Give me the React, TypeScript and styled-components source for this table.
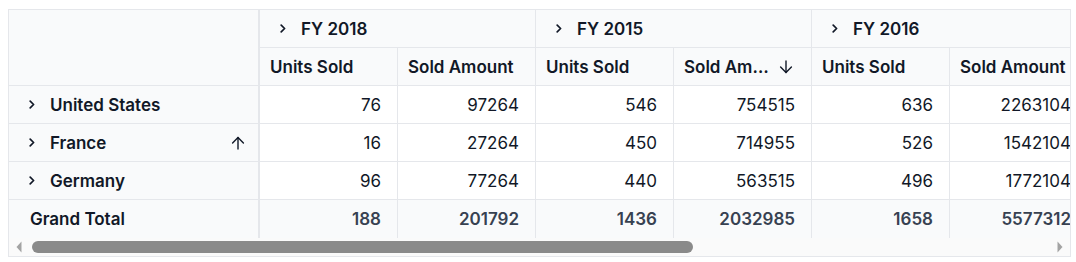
import React from "react"
import styled, { createGlobalStyle } from "styled-components"

const GlobalStyle = createGlobalStyle`
  html, body {
    margin: 0;
    overflow: hidden;
    background: #ffffff;
  }
  body {
    padding: 9px 8px 8px;
    font-family: Inter, "Noto Sans", sans-serif;
    color: #111827;
  }
`

const border = "#e5e7eb"
const headerBg = "#f9fafb"

const PivotFrame = styled.div`
  width: 1063px;
  border: 1px solid ${border};
  box-sizing: border-box;
  background: #ffffff;
`

const Viewport = styled.div`
  overflow: hidden;
`

const Grid = styled.div`
  display: grid;
  grid-template-columns: 251px repeat(6, 138px);
  grid-auto-rows: 38px;
  width: max-content;
  font-size: 17px;
`

const Cell = styled.div`
  box-sizing: border-box;
  display: flex;
  align-items: center;
  border-right: 1px solid ${border};
  border-bottom: 1px solid ${border};
  white-space: nowrap;
  overflow: hidden;
`

const CornerCell = styled(Cell)`
  grid-row: span 2;
  background: ${headerBg};
  border-right-width: 2px;
`

const GroupHeader = styled(Cell)`
  grid-column: span 2;
  background: ${headerBg};
  font-weight: 600;
  padding-left: 20px;
`

const ValueHeader = styled(Cell)`
  background: ${headerBg};
  font-weight: 600;
  padding: 0 18px 0 10px;
  gap: 4px;
`

const HeaderText = styled.span`
  overflow: hidden;
  text-overflow: ellipsis;
  flex: 1;
`

const RowHeader = styled(Cell)<{ $total?: boolean }>`
  background: ${headerBg};
  font-weight: 600;
  border-right-width: 2px;
  padding: 0 13px 0 ${({ $total }) => ($total ? "21px" : "20px")};
  border-bottom-width: ${({ $total }) => ($total ? "0" : "1px")};
`

const RowLabel = styled.span`
  flex: 1;
`

const ValueCell = styled(Cell)<{ $total?: boolean }>`
  justify-content: flex-end;
  padding-right: 16px;
  background: ${({ $total }) => ($total ? headerBg : "#ffffff")};
  font-weight: ${({ $total }) => ($total ? 600 : 400)};
  color: ${({ $total }) => ($total ? "#374151" : "#111827")};
  border-bottom-width: ${({ $total }) => ($total ? "0" : "1px")};
`

const ChevronBox = styled.svg`
  width: 6px;
  height: 9px;
  margin-right: 15px;
  flex: none;
`

const SortArrow = styled.svg`
  width: 14px;
  height: 14px;
  flex: none;
`

const ScrollBar = styled.div`
  display: flex;
  align-items: center;
  height: 18px;
  background: #fafafa;
  padding: 0 7px;
  gap: 10px;
`

const ScrollArrow = styled.svg`
  width: 6px;
  height: 12px;
  flex: none;
`

const ScrollTrack = styled.div`
  flex: 1;
  height: 12px;
`

const ScrollThumb = styled.div`
  height: 12px;
  border-radius: 6px;
  background: #8a8a8a;
`

const Chevron = () => (
  <ChevronBox viewBox="0 0 6 9">
    <path d="M1.2 1.2 L4.6 4.5 L1.2 7.8" fill="none" stroke="#111827" strokeWidth="1.7" strokeLinecap="round" strokeLinejoin="round" />
  </ChevronBox>
)

const Arrow = ({ dir }: { dir: "up" | "down" }) => (
  <SortArrow viewBox="0 0 14 14">
    <g fill="none" stroke="#111827" strokeWidth="1.4" strokeLinecap="round" strokeLinejoin="round" transform={dir === "down" ? "rotate(180 7 7)" : undefined}>
      <path d="M7 1.5 V13" />
      <path d="M1.6 6.9 L7 1.5 L12.4 6.9" />
    </g>
  </SortArrow>
)

type Row = { country: string; values: number[]; sorted?: boolean }

const years = ["FY 2018", "FY 2015", "FY 2016"]

const rows: Row[] = [
  { country: "United States", values: [76, 97264, 546, 754515, 636, 2263104] },
  { country: "France", values: [16, 27264, 450, 714955, 526, 1542104], sorted: true },
  { country: "Germany", values: [96, 77264, 440, 563515, 496, 1772104] },
]

const totals = [188, 201792, 1436, 2032985, 1658, 5577312]

export default function App() {
  return (
    <>
      <GlobalStyle />
      <PivotFrame>
        <Viewport>
          <Grid>
            <CornerCell />
            {years.map(y => (
              <GroupHeader key={y}>
                <Chevron />
                {y}
              </GroupHeader>
            ))}
            {years.map(y => (
              <React.Fragment key={y}>
                <ValueHeader>
                  <HeaderText>Units Sold</HeaderText>
                </ValueHeader>
                <ValueHeader>
                  <HeaderText>Sold Amount</HeaderText>
                  {y === "FY 2015" && <Arrow dir="down" />}
                </ValueHeader>
              </React.Fragment>
            ))}
            {rows.map(r => (
              <React.Fragment key={r.country}>
                <RowHeader>
                  <Chevron />
                  <RowLabel>{r.country}</RowLabel>
                  {r.sorted && <Arrow dir="up" />}
                </RowHeader>
                {r.values.map((v, i) => (
                  <ValueCell key={i}>{v}</ValueCell>
                ))}
              </React.Fragment>
            ))}
            <RowHeader $total>
              <RowLabel>Grand Total</RowLabel>
            </RowHeader>
            {totals.map((v, i) => (
              <ValueCell key={i} $total>
                {v}
              </ValueCell>
            ))}
          </Grid>
        </Viewport>
        <ScrollBar>
          <ScrollArrow viewBox="0 0 6 12">
            <path d="M5.5 0.5 L0.5 6 L5.5 11.5 Z" fill="#a3a3a3" />
          </ScrollArrow>
          <ScrollTrack>
            <ScrollThumb style={{ width: `${(1062 / 1631) * 100}%` }} />
          </ScrollTrack>
          <ScrollArrow viewBox="0 0 6 12">
            <path d="M0.5 0.5 L5.5 6 L0.5 11.5 Z" fill="#a3a3a3" />
          </ScrollArrow>
        </ScrollBar>
      </PivotFrame>
    </>
  )
}
